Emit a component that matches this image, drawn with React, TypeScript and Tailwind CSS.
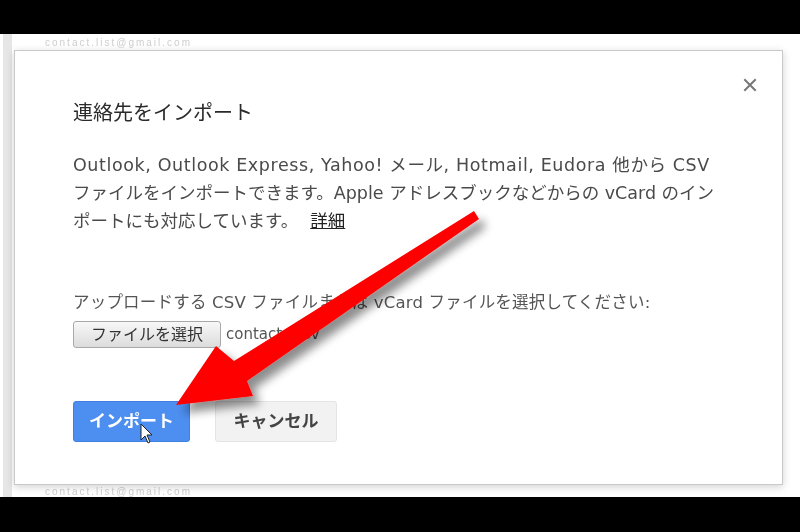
import React from 'react';

const font = { fontFamily: '"Liberation Sans", Arial, "Noto Sans CJK JP", sans-serif' };
const wide = { fontFamily: '"DejaVu Sans", Verdana, "Noto Sans CJK JP", sans-serif' };

function CloseIcon() {
  return (
    <svg width="14" height="14" viewBox="0 0 14 14" className="block">
      <path d="M2 2 L12 12 M12 2 L2 12" stroke="#777" strokeWidth="2" strokeLinecap="square" />
    </svg>
  );
}

function RedArrow() {
  return (
    <svg width="800" height="532" viewBox="0 0 800 532" className="absolute inset-0 pointer-events-none">
      <defs>
        <filter id="sh" x="-20%" y="-20%" width="140%" height="140%">
          <feGaussianBlur in="SourceAlpha" stdDeviation="5" />
          <feOffset dx="7" dy="8" result="b" />
          <feComponentTransfer><feFuncA type="linear" slope="0.45" /></feComponentTransfer>
          <feMerge>
            <feMergeNode />
            <feMergeNode in="SourceGraphic" />
          </feMerge>
        </filter>
      </defs>
      <path
        d="M474 211 L479 219 L247 381 L253 396 L176 405 L216 346 L234 361 Z"
        fill="#ff0000"
        filter="url(#sh)"
      />
    </svg>
  );
}

function Cursor() {
  return (
    <svg width="14" height="22" viewBox="0 0 14 22" className="absolute left-[140px] top-[423px] pointer-events-none">
      <path d="M1 1 L1 17 L5 13 L8 20 L10 19 L7 12 L12 12 Z" fill="#fff" stroke="#222" strokeWidth="1" strokeLinejoin="round" />
    </svg>
  );
}

export default function App() {
  return (
    <div className="relative w-[800px] h-[532px] bg-black overflow-hidden blur-[0.5px]" style={font}>
      <div className="h-[34px]" />
      <div className="relative h-[463px] bg-white flex">
        <div className="w-[3px]" />
        <div className="w-[9px] bg-[#e6e6e6]" />
        <div className="flex flex-col flex-1">
          <div className="h-[16px] pl-[33px] flex items-center text-[10px] text-[#cfcfcf] tracking-[2px]">
            contact.list@gmail.com
          </div>
          <div className="relative ml-[2px] mr-[17px] h-[435px] bg-white border border-[#c9c9c9] shadow-[0_2px_8px_rgba(0,0,0,0.18)] pl-[58px] pt-[49px]">
            <button className="absolute right-[25px] top-[27px]"><CloseIcon /></button>
            <h2 className="text-[20px] leading-[26px] text-[#2a2a2a]" style={wide}>連絡先をインポート</h2>
            <p className="mt-[25px] text-[17.5px] leading-[28px] text-[#4a4a4a] whitespace-nowrap" style={wide}>
              <span className="tracking-[0.6px]">Outlook, Outlook Express, Yahoo! メール, Hotmail, Eudora 他から CSV</span>
              <br />
              ファイルをインポートできます。Apple アドレスブックなどからの vCard のイン
              <br />
              ポートにも対応しています。<span className="ml-[12px] underline text-[#222]">詳細</span>
            </p>
            <div className="mt-[58px] text-[16.5px] leading-[20px] text-[#555] whitespace-nowrap tracking-[0.2px]" style={wide}>
              アップロードする CSV ファイルまたは vCard ファイルを選択してください:
            </div>
            <div className="mt-[8px] flex items-center gap-[5px]">
              <button className="h-[27px] w-[148px] border border-[#a9a9a9] rounded-[3px] bg-gradient-to-b from-[#f8f8f8] to-[#dcdcdc] text-[16px] text-[#333]">
                ファイルを選択
              </button>
              <span className="text-[15px] text-[#555]" style={wide}>contacts.csv</span>
            </div>
            <div className="mt-[53px] flex gap-[25px]">
              <button className="h-[41px] w-[117px] rounded-[3px] bg-[#4d8ff0] border border-[#3f7fe0] text-white text-[17px] font-bold">
                インポート
              </button>
              <button className="h-[41px] w-[122px] rounded-[3px] bg-[#f2f2f2] border border-[#e4e4e4] text-[#444] text-[17px] font-bold">
                キャンセル
              </button>
            </div>
          </div>
          <div className="h-[12px] pl-[33px] flex items-center text-[10px] text-[#cfcfcf] tracking-[2px]">
            contact.list@gmail.com
          </div>
        </div>
      </div>
      <RedArrow />
      <Cursor />
    </div>
  );
}
